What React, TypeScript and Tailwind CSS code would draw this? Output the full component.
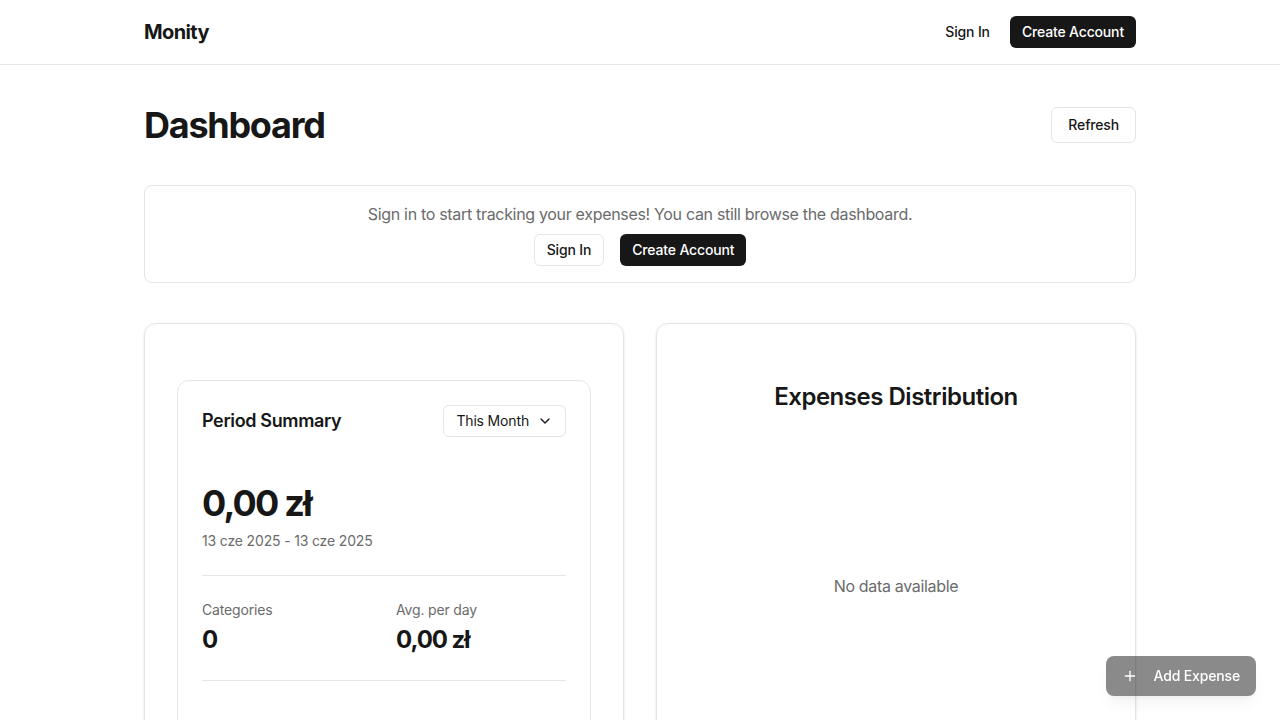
import React from "react";

function Chevron() {
  return (
    <svg width="16" height="16" viewBox="0 0 24 24" fill="none" stroke="currentColor" strokeWidth="2" strokeLinecap="round" strokeLinejoin="round">
      <path d="m6 9 6 6 6-6" />
    </svg>
  );
}

function Plus() {
  return (
    <svg width="16" height="16" viewBox="0 0 24 24" fill="none" stroke="currentColor" strokeWidth="2" strokeLinecap="round" strokeLinejoin="round">
      <path d="M5 12h14" />
      <path d="M12 5v14" />
    </svg>
  );
}

export default function App() {
  return (
    <div className="min-h-screen bg-white text-[#171717] tracking-[-0.01em]" style={{ fontFamily: "Inter, 'Noto Sans', sans-serif" }}>
      <header className="h-[65px] border-b border-[#e5e5e5]">
        <div className="mx-auto flex h-full max-w-[992px] items-center justify-between">
          <div className="text-xl font-bold tracking-[-0.03em]">Monity</div>
          <div className="flex items-center gap-2">
            <button className="h-8 rounded-md px-3 text-sm font-medium">Sign In</button>
            <button className="h-8 rounded-md bg-[#171717] px-3 text-sm font-medium text-white">Create Account</button>
          </div>
        </div>
      </header>

      <main className="mx-auto max-w-[992px] pt-10">
        <div className="mb-10 flex items-center justify-between">
          <h1 className="text-4xl font-bold tracking-[-0.035em]">Dashboard</h1>
          <button className="h-9 rounded-md border border-[#e5e5e5] px-4 text-sm font-medium">Refresh</button>
        </div>

        <div className="mb-10 flex flex-col items-center gap-2 rounded-lg border border-[#e5e5e5] p-4">
          <p className="text-base tracking-[-0.02em] text-[#6b6b6b]">Sign in to start tracking your expenses! You can still browse the dashboard.</p>
          <div className="flex items-center gap-4">
            <button className="h-8 rounded-md border border-[#e5e5e5] px-3 text-sm font-medium">Sign In</button>
            <button className="h-8 rounded-md bg-[#171717] px-3 text-sm font-medium text-white">Create Account</button>
          </div>
        </div>

        <div className="grid grid-cols-2 gap-8">
          <div className="rounded-xl border border-[#e5e5e5] px-8 pb-8 pt-14 shadow-sm">
            <div className="rounded-xl border border-[#e5e5e5] p-6">
              <div className="flex h-8 items-center justify-between">
                <h2 className="text-lg font-semibold tracking-[-0.02em]">Period Summary</h2>
                <button className="flex h-8 items-center gap-2 rounded-md border border-[#e5e5e5] pl-3 pr-3 text-sm">
                  <span>This Month</span>
                  <Chevron />
                </button>
              </div>
              <div className="mt-[46px] text-4xl font-bold tracking-[-0.05em]">0,00 zł</div>
              <div className="mt-2 text-sm text-[#6b6b6b]">13 cze 2025 - 13 cze 2025</div>
              <div className="mt-6 border-t border-[#e5e5e5]" />
              <div className="grid grid-cols-2 gap-6 pt-6 pb-6">
                <div>
                  <div className="text-sm text-[#6b6b6b]">Categories</div>
                  <div className="mt-1 text-2xl font-bold tracking-[-0.045em]">0</div>
                </div>
                <div>
                  <div className="text-sm text-[#6b6b6b]">Avg. per day</div>
                  <div className="mt-1 text-2xl font-bold tracking-[-0.045em]">0,00 zł</div>
                </div>
              </div>
              <div className="border-t border-[#e5e5e5]" />
              <div className="h-24" />
            </div>
          </div>

          <div className="rounded-xl border border-[#e5e5e5] px-8 pb-8 pt-[57px] shadow-sm">
            <h2 className="text-center text-2xl font-semibold tracking-[-0.02em]">Expenses Distribution</h2>
            <div className="mt-[23px] flex h-[300px] items-center justify-center text-base tracking-[-0.02em] text-[#6b6b6b]">No data available</div>
          </div>
        </div>
      </main>

      <button className="fixed bottom-6 right-6 flex h-10 items-center gap-4 rounded-lg bg-[#171717] px-4 text-sm font-medium text-white opacity-50 shadow-lg">
        <Plus />
        <span>Add Expense</span>
      </button>
    </div>
  );
}
